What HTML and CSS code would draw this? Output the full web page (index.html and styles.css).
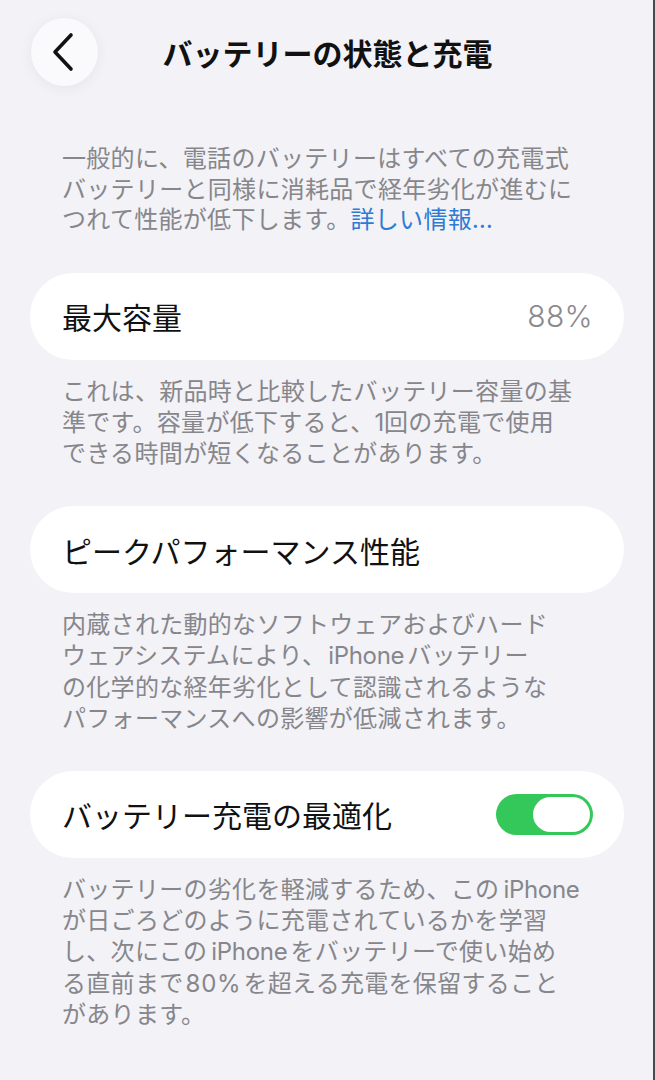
FILE: index.html
```html
<!DOCTYPE html>
<html lang="ja">
<head>
<meta charset="utf-8">
<title>バッテリーの状態と充電</title>
<link rel="stylesheet" href="styles.css">
</head>
<body>
<div class="page">
  <header class="header">
    <button class="back" aria-label="戻る">
      <svg width="24" height="40" viewBox="0 0 24 40" aria-hidden="true">
        <path d="M20 3 L4 20 L20 37" fill="none" stroke="#111" stroke-width="3.6" stroke-linecap="round" stroke-linejoin="round"/>
      </svg>
    </button>
    <h1 class="title">バッテリーの状態と充電</h1>
    <span></span>
  </header>

  <p class="intro">一般的に、電話のバッテリーはすべての充電式<br>バッテリーと同様に消耗品で経年劣化が進むに<br>つれて性能が低下します。<a class="link" href="#">詳しい情報...</a></p>

  <section class="card">
    <span class="label">最大容量</span>
    <span class="value">88%</span>
  </section>
  <p class="note">これは、新品時と比較したバッテリー容量の基<br>準です。容量が低下すると、<span class="latin">1</span>回の充電で使用<br>できる時間が短くなることがあります。</p>

  <section class="card">
    <span class="label">ピークパフォーマンス性能</span>
  </section>
  <p class="note">内蔵された動的なソフトウェアおよびハード<br>ウェアシステムにより、<span class="latin wide">iPhone</span>バッテリー<br>の化学的な経年劣化として認識されるような<br>パフォーマンスへの影響が低減されます。</p>

  <section class="card">
    <span class="label">バッテリー充電の最適化</span>
    <span class="toggle" role="switch" aria-checked="true"><span class="knob"></span></span>
  </section>
  <p class="note">バッテリーの劣化を軽減するため、この<span class="latin gap">iPhone</span><br>が日ごろどのように充電されているかを学習<br>し、次にこの<span class="latin gap">iPhone</span>をバッテリーで使い始め<br>る直前まで<span class="latin num">80%</span>を超える充電を保留すること<br>があります。</p>
</div>
</body>
</html>
```

FILE: styles.css
```css
html, body {
  margin: 0;
  padding: 0;
  background: #f2f2f7;
}

body {
  font-family: "Noto Sans CJK JP", "Noto Sans", sans-serif;
  color: #111;
  text-spacing-trim: space-all;
}

.page {
  min-height: 1080px;
  box-sizing: border-box;
  border-right: 2px solid #4a4a52;
  padding-bottom: 40px;
}

.header {
  height: 104px;
  display: grid;
  grid-template-columns: 1fr auto 1fr;
  align-items: center;
  padding: 0 31px;
}

.back {
  width: 67px;
  height: 68px;
  border-radius: 50%;
  border: none;
  background: #fafafc;
  box-shadow: 0 2px 14px rgba(0, 0, 0, 0.06);
  display: flex;
  align-items: center;
  justify-content: center;
  padding: 0 4px 0 0;
  cursor: pointer;
}

.title {
  margin: 0;
  font-size: 30px;
  font-weight: 700;
  letter-spacing: 0;
  line-height: 1;
  padding-left: 2px;
}

.intro {
  margin: 38px 0 0;
  padding: 0 62px;
  font-size: 24px;
  line-height: 30.5px;
  color: #86868b;
  letter-spacing: 0.3px;
}

.link {
  color: #2f7ad3;
  text-decoration: none;
}

.card {
  margin: 39px 29px 0 30px;
  height: 87px;
  box-sizing: border-box;
  background: #ffffff;
  border-radius: 43px;
  display: flex;
  align-items: center;
  justify-content: space-between;
  padding: 0 31px 0 32px;
}

.label {
  font-size: 30px;
  color: #111;
  letter-spacing: 0;
}

.value {
  font-family: "Inter", "Noto Sans", sans-serif;
  font-size: 30px;
  font-weight: 300;
  color: #8a8a8e;
  letter-spacing: 0.3px;
}

.note {
  margin: 14px 0 0;
  padding: 0 62px;
  font-size: 24px;
  line-height: 31.2px;
  color: #86868b;
  letter-spacing: 0.3px;
}

.latin {
  font-family: "Inter", "Noto Sans", sans-serif;
  letter-spacing: -0.3px;
  line-height: 1;
}

.wide {
  margin: 0 3px 0 2px;
}

.gap {
  margin: 0 3px 0 4px;
}

.num {
  margin: 0 2px;
  letter-spacing: 0.8px;
}

.toggle {
  width: 97px;
  height: 41px;
  box-sizing: border-box;
  border-radius: 21px;
  background: #34c759;
  display: flex;
  align-items: center;
  justify-content: flex-end;
  padding: 0 3px;
}

.knob {
  width: 57px;
  height: 35px;
  border-radius: 18px;
  background: #ffffff;
}
```
